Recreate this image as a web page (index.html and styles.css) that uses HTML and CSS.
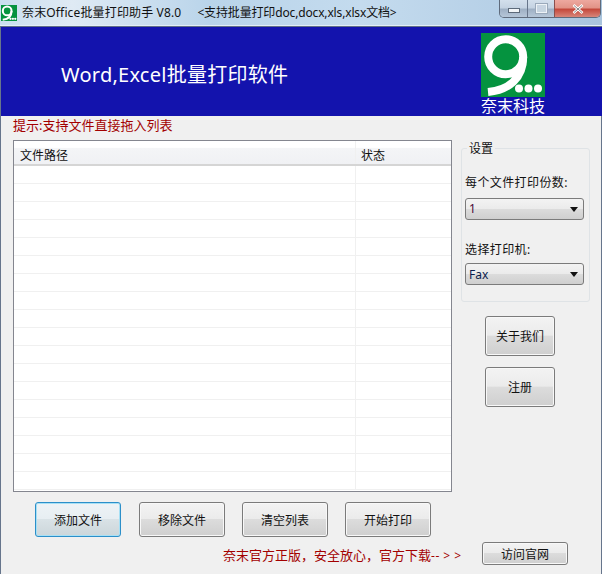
FILE: index.html
```html
<!DOCTYPE html>
<html lang="zh">
<head>
<meta charset="utf-8">
<title>奈末Office批量打印助手</title>
<link rel="stylesheet" href="styles.css">
</head>
<body>
<div class="window">
  <header class="titlebar">
    <svg class="app-icon" width="16" height="16" viewBox="0 0 64 64"><rect width="64" height="64" fill="#05933f"/><circle cx="24.700" cy="23.700" r="17.500" fill="none" stroke="#fff" stroke-width="8"/><path d="M42.200 24C42.200 45 28 57 7 59" fill="none" stroke="#fff" stroke-width="8"/><circle cx="38" cy="55" r="4.500" fill="#fff"/><circle cx="47.500" cy="55" r="4.500" fill="#fff"/><circle cx="57" cy="55" r="4.500" fill="#fff"/></svg>
    <span class="app-name">奈末Office批量打印助手 V8.0</span>
    <span class="app-note">&lt;支持批量打印doc,docx,xls,xlsx文档&gt;</span>
    <div class="controls">
      <div class="ctl ctl-min"><i class="min-glyph"></i></div>
      <div class="ctl ctl-max"><i class="max-glyph"></i></div>
      <div class="ctl ctl-close"><svg width="12" height="10" viewBox="0 0 12 10"><path d="M1.500 1L10.500 9M10.500 1L1.500 9" stroke="#fff" stroke-width="2.600"/><path d="M2 1.500L10 8.500M10 1.500L2 8.500" stroke="#555" stroke-width=".7"/></svg></div>
    </div>
  </header>

  <section class="banner">
    <h1 class="banner-title">Word,Excel批量打印软件</h1>
    <div class="brand">
      <svg class="logo" width="64" height="64" viewBox="0 0 64 64"><rect width="64" height="64" fill="#05933f"/><circle cx="24.700" cy="23.700" r="17.500" fill="none" stroke="#fff" stroke-width="8"/><path d="M42.200 24C42.200 45 28 57 7 59" fill="none" stroke="#fff" stroke-width="8"/><circle cx="38" cy="55.500" r="4" fill="#fff"/><circle cx="47.500" cy="55.500" r="4" fill="#fff"/><circle cx="57" cy="55.500" r="4" fill="#fff"/></svg>
      <div class="brand-name">奈末科技</div>
    </div>
  </section>

  <p class="hint">提示:支持文件直接拖入列表</p>

  <main class="workspace">
    <div class="left">
      <div class="list">
        <div class="row head"><div class="c1">文件路径</div><div class="c2">状态</div></div>
        <div class="row"><div class="c1"></div><div class="c2"></div></div>
        <div class="row"><div class="c1"></div><div class="c2"></div></div>
        <div class="row"><div class="c1"></div><div class="c2"></div></div>
        <div class="row"><div class="c1"></div><div class="c2"></div></div>
        <div class="row"><div class="c1"></div><div class="c2"></div></div>
        <div class="row"><div class="c1"></div><div class="c2"></div></div>
        <div class="row"><div class="c1"></div><div class="c2"></div></div>
        <div class="row"><div class="c1"></div><div class="c2"></div></div>
        <div class="row"><div class="c1"></div><div class="c2"></div></div>
        <div class="row"><div class="c1"></div><div class="c2"></div></div>
        <div class="row"><div class="c1"></div><div class="c2"></div></div>
        <div class="row"><div class="c1"></div><div class="c2"></div></div>
        <div class="row"><div class="c1"></div><div class="c2"></div></div>
        <div class="row"><div class="c1"></div><div class="c2"></div></div>
        <div class="row"><div class="c1"></div><div class="c2"></div></div>
        <div class="row"><div class="c1"></div><div class="c2"></div></div>
        <div class="row"><div class="c1"></div><div class="c2"></div></div>
        <div class="row"><div class="c1"></div><div class="c2"></div></div>
      </div>
      <div class="actions">
        <button class="btn btn-action is-focus">添加文件</button>
        <button class="btn btn-action">移除文件</button>
        <button class="btn btn-action">清空列表</button>
        <button class="btn btn-action">开始打印</button>
      </div>
    </div>

    <aside class="right">
      <div class="group">
        <span class="legend">设置</span>
        <div class="field-label label-first">每个文件打印份数:</div>
        <div class="select"><span class="val-copies">1</span><i class="caret"></i></div>
        <div class="field-label label-second">选择打印机:</div>
        <div class="select"><span class="val-printer">Fax</span><i class="caret"></i></div>
      </div>
      <button class="btn btn-side btn-about">关于我们</button>
      <button class="btn btn-side btn-reg">注册</button>
    </aside>
  </main>

  <footer class="footer">
    <span class="promo">奈末官方正版，安全放心，官方下载<span class="promo-arrow">-- &gt; &gt;</span></span>
    <button class="btn btn-site">访问官网</button>
  </footer>
</div>
</body>
</html>
```
FILE: styles.css
```css
* { box-sizing: border-box; }
html, body { margin: 0; padding: 0; }
body {
  width: 602px;
  height: 574px;
  overflow: hidden;
  font-family: "Noto Sans", "Noto Sans CJK SC", sans-serif;
  font-size: 12px;
  color: #111;
}
.window {
  width: 602px;
  height: 574px;
  background: #f0f0f0;
  border-left: 1px solid #66758c;
  border-right: 1px solid #66758c;
  display: flex;
  flex-direction: column;
}
.titlebar {
  height: 27px;
  margin: 0 -1px;
  flex: none;
  display: flex;
  align-items: center;
  padding-left: 1px;
  background: linear-gradient(90deg, #c9deef 0%, #dfeaf4 12%, #b9d4ea 35%, #c4dbee 60%, #b5cfe6 85%, #a9c4dd 100%);
  border-bottom: 1px solid #5f6f88;
  box-shadow: inset 0 -1px 0 #e4eef7;
  position: relative;
}
.app-icon { flex: none; }
.app-name { margin-left: 5px; font-size: 12px; line-height: 26px; letter-spacing: .15px; color: #111; }
.app-note { margin-left: 16px; font-size: 12px; line-height: 26px; letter-spacing: -.15px; color: #111; }
.controls {
  position: absolute;
  top: 0;
  left: 499px;
  width: 102px;
  height: 18px;
  display: flex;
  border: 1px solid #5f6b7c;
  border-top: 0;
  border-radius: 0 0 5px 5px;
  overflow: hidden;
}
.ctl { display: flex; align-items: center; justify-content: center; height: 100%; }
.ctl-min { width: 28px; border-right: 1px solid #67758a; background: linear-gradient(#d3dfec 0, #c5d3e2 45%, #9fb0c4 55%, #b6c6d8 100%); }
.ctl-max { width: 27px; border-right: 1px solid #8a4f4d; background: linear-gradient(#d3dfec 0, #c5d3e2 45%, #9fb0c4 55%, #b6c6d8 100%); }
.ctl-close { flex: 1; background: linear-gradient(#eda89f 0, #e29387 45%, #c4493c 55%, #d8867a 100%); }
.min-glyph { display: block; width: 12px; height: 5px; margin-top: 3px; background: #f2f5f8; border: 1px solid #5d6a7a; }
.max-glyph { display: block; width: 11px; height: 9px; background: #c7d4e1; border: 1px solid #edf2f7; box-shadow: 0 0 0 1px #9aa9ba; }

.banner {
  height: 89px;
  flex: none;
  background: #1313ad;
  color: #fff;
  display: flex;
  margin-right: -1px;
  padding: 6px 0 0 60px;
}
.banner-title {
  margin: 22px 0 0;
  font-size: 20px;
  line-height: 40px;
  font-weight: 400;
  letter-spacing: .25px;
  width: 420px;
}
.brand { width: 64px; }
.logo { display: block; }
.brand-name { font-size: 16px; line-height: 18px; white-space: nowrap; }

.hint {
  margin: 0;
  height: 24px;
  flex: none;
  padding-left: 12px;
  font-size: 13px;
  line-height: 18px;
  color: #a30000;
}
.workspace { display: flex; flex: none; height: 402px; }
.left { width: 460px; padding-left: 12px; }
.list {
  width: 439px;
  height: 352px;
  background: #fff;
  border: 1px solid #84868f;
  overflow: hidden;
}
.row { display: flex; height: 18px; border-bottom: 1px solid #f0f0f0; }
.row.head {
  height: 25px;
  background: linear-gradient(#fff 0, #fff 28%, #f4f5f7 30%, #f0f1f4 100%);
  border-bottom: 2px solid #d5d5d5;
  line-height: 29px;
}
.c1 { width: 342px; border-right: 1px solid #f0f0f0; padding-left: 6px; }
.c2 { flex: 1; padding-left: 5px; }
.actions { display: flex; gap: 17px; padding: 10px 0 0 22px; }

.btn {
  font: inherit;
  color: #111;
  border: 1px solid #7b7b7b;
  border-radius: 3px;
  background: linear-gradient(#f3f3f3 0, #ebebeb 48%, #dcdcdc 50%, #cfcfcf 100%);
  box-shadow: inset 0 0 0 1px #f8f8f8;
  padding: 0;
  flex: none;
}
.btn-action { width: 86px; height: 35px; }
.is-focus {
  margin-right: 1px;
  border-color: #2c8fc9;
  box-shadow: inset 0 0 0 1px #a7e0f5;
  background: linear-gradient(#eef3f6 0, #e7eef2 48%, #d9e2e6 50%, #ccd6da 100%);
}
.right { width: 140px; }
.group {
  position: relative;
  width: 129px;
  height: 154px;
  margin-top: 8px;
  border: 1px solid #dfe3e6;
  border-radius: 3px;
  padding: 0 4px;
}
.legend {
  position: absolute;
  top: -8px;
  left: 5px;
  padding: 0 2px;
  background: #f0f0f0;
  line-height: 16px;
}
.field-label { line-height: 18px; margin-left: -1px; letter-spacing: .4px; white-space: nowrap; }
.label-first { padding-top: 25px; height: 49px; }
.label-second { padding-top: 21px; height: 43px; }
.select {
  width: 119px;
  height: 22px;
  margin-left: -1px;
  border: 1px solid #7b7b7b;
  border-radius: 3px;
  background: linear-gradient(#f3f3f3 0, #ebebeb 48%, #dcdcdc 50%, #cfcfcf 100%);
  display: flex;
  align-items: center;
  justify-content: space-between;
  padding: 0 5px 0 3px;
  line-height: 20px;
}
.val-copies { color: #4a0a3a; }
.val-printer { color: #0c1c4c; padding-top: 1px; }
.caret { width: 0; height: 0; border: 4px solid transparent; border-top: 5px solid #111; border-bottom: 0; }
.btn-side { display: block; width: 70px; height: 40px; margin-left: 24px; }
.btn-about { margin-top: 14px; }
.btn-reg { margin-top: 11px; }

.footer {
  flex: none;
  display: flex;
  align-items: flex-start;
  padding-left: 222px;
  height: 32px;
}
.promo {
  width: 259px;
  margin-top: 4px;
  font-size: 13px;
  line-height: 18px;
  color: #a30000;
  white-space: nowrap;
}
.promo-arrow { font-size: 12px; letter-spacing: .5px; }
.btn-site { width: 86px; height: 23px; }
```
